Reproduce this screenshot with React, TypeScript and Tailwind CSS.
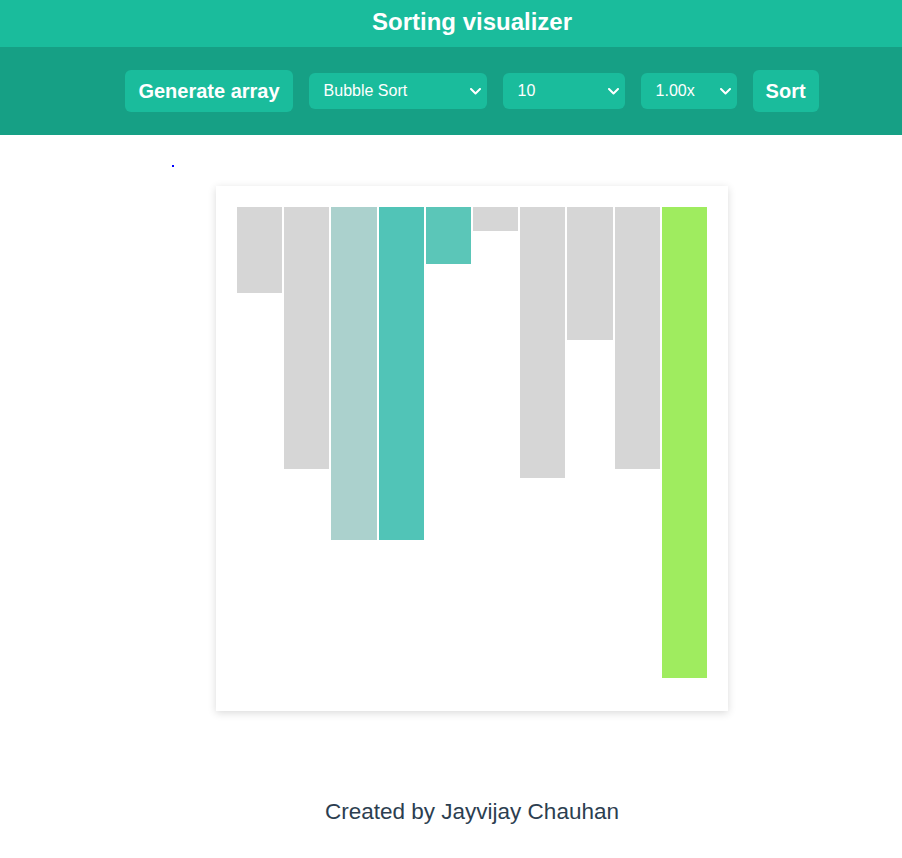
// valores de las barras (altura en px) y su color
const bars = [
  { h: 86, color: "bg-[#d6d6d6]" },
  { h: 262, color: "bg-[#d6d6d6]" },
  { h: 333, color: "bg-[#abd1cd]" },
  { h: 333, color: "bg-[#51c4b7]" },
  { h: 57, color: "bg-[#5bc6b8]" },
  { h: 24, color: "bg-[#d6d6d6]" },
  { h: 271, color: "bg-[#d6d6d6]" },
  { h: 133, color: "bg-[#d6d6d6]" },
  { h: 262, color: "bg-[#d6d6d6]" },
  { h: 471, color: "bg-[#9fec5f]" },
]

function Select({ label, width }: { label: string; width: string }) {
  return (
    <div
      className={`flex items-center justify-between h-9 rounded-md bg-[#1abc9c] pl-[15px] pr-[6px] text-white text-base ${width}`}
    >
      <span>{label}</span>
      <svg width="11" height="7" viewBox="0 0 11 7" fill="none">
        <polyline points="1,1 5.5,5.5 10,1" stroke="white" strokeWidth="2" strokeLinecap="round" strokeLinejoin="round" />
      </svg>
    </div>
  )
}

export default function App() {
  return (
    <div className="min-h-[858px] bg-white font-['Liberation_Sans',Arial,sans-serif]">
      {/* Header */}
      <header className="h-[47px] bg-[#1abc9c] flex items-center justify-center pl-[42px] pb-[3px]">
        <h1 className="text-white text-[24px] font-bold">Sorting visualizer</h1>
      </header>

      {/* Controles */}
      <div className="h-[88px] bg-[#16a085] flex items-center justify-center gap-4 pl-[42px]">
        <button className="h-[42px] px-[13px] rounded-md bg-[#1abc9c] text-white text-[20px] font-bold">
          Generate array
        </button>
        <Select label="Bubble Sort" width="w-[178px]" />
        <Select label="10" width="w-[122px]" />
        <Select label="1.00x" width="w-[96px]" />
        <button className="h-[42px] px-[13px] rounded-md bg-[#1abc9c] text-white text-[20px] font-bold">
          Sort
        </button>
      </div>

      <div className="pl-[42px]">
        <div className="h-[51px] pt-[29px] pl-[129px]">
          <div className="w-[2px] h-[2px] ml-[1px] mt-[1px] bg-[#0000ff]"></div>
        </div>

        {/* Tarjeta con las barras */}
        <div className="mx-auto w-[512px] h-[525px] bg-white shadow-[0_2px_8px_rgba(0,0,0,0.15)] pt-[21px] px-5">
          <div className="flex items-start">
            {bars.map((bar, i) => (
              <div key={i} className={`flex-1 mx-[1px] ${bar.color}`} style={{ height: bar.h }}></div>
            ))}
          </div>
        </div>

        <footer className="mt-[84px] text-center text-[22.5px] text-[#2c3e50]">Created by Jayvijay Chauhan</footer>
      </div>
    </div>
  )
}
